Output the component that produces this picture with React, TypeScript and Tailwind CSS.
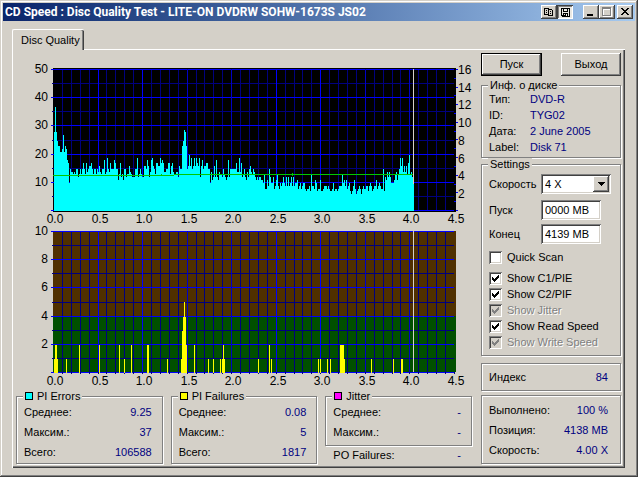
import clsx from "clsx";
import type { ReactNode } from "react";

const RAISED =
  "bg-[#d4d0c8] shadow-[inset_-1px_-1px_#404040,inset_1px_1px_#fff,inset_-2px_-2px_#808080]";
const SUNKEN =
  "shadow-[inset_1px_1px_#808080,inset_-1px_-1px_#fff,inset_2px_2px_#404040,inset_-2px_-2px_#d4d0c8]";
const ETCHED = "border border-[#808080] shadow-[inset_1px_1px_#fff,1px_1px_#fff]";

// PI errors, one value for each pixel column
const PIE = [
  28, 37, 28, 25, 23, 23, 21, 21, 22, 27, 21, 23, 22, 18, 17, 10, 15, 14, 14, 13, 14, 13, 15, 15,
  12, 13, 15, 13, 15, 17, 15, 13, 17, 14, 15, 16, 16, 17, 15, 13, 15, 15, 13, 15, 14, 16, 14, 13,
  15, 15, 18, 13, 14, 19, 15, 14, 17, 15, 15, 15, 18, 17, 15, 15, 11, 13, 17, 12, 13, 11, 15, 15,
  12, 13, 13, 16, 14, 13, 12, 12, 12, 15, 15, 19, 12, 13, 15, 13, 12, 12, 16, 16, 15, 18, 16, 12,
  14, 18, 19, 16, 15, 13, 17, 17, 16, 16, 19, 17, 18, 17, 14, 14, 15, 15, 17, 17, 13, 16, 17, 14,
  13, 13, 14, 14, 12, 16, 15, 15, 23, 25, 29, 28, 23, 15, 16, 20, 16, 19, 15, 16, 19, 16, 19, 17,
  16, 19, 12, 16, 18, 15, 16, 16, 17, 17, 15, 15, 10, 14, 11, 12, 16, 12, 18, 12, 11, 14, 13, 13,
  12, 15, 13, 12, 11, 12, 18, 12, 15, 15, 15, 15, 15, 15, 17, 14, 14, 19, 14, 17, 12, 13, 15, 12,
  11, 14, 12, 15, 16, 14, 13, 15, 14, 12, 11, 12, 11, 12, 12, 11, 11, 10, 13, 8, 8, 11, 9, 15,
  12, 10, 10, 12, 8, 9, 11, 13, 9, 8, 10, 9, 10, 12, 10, 9, 12, 9, 12, 9, 10, 12, 9, 12,
  9, 10, 10, 11, 8, 9, 10, 8, 9, 10, 10, 8, 7, 8, 8, 9, 7, 13, 9, 9, 8, 11, 10, 7,
  8, 8, 11, 7, 7, 8, 9, 9, 9, 8, 9, 8, 7, 7, 8, 10, 7, 8, 8, 7, 8, 9, 9, 9,
  13, 10, 11, 9, 11, 8, 9, 10, 7, 6, 7, 9, 11, 8, 6, 7, 8, 9, 8, 6, 8, 9, 8, 8,
  9, 9, 7, 9, 10, 9, 7, 8, 9, 9, 11, 8, 9, 10, 9, 8, 8, 15, 7, 12, 11, 14, 12, 14,
  12, 10, 10, 10, 11, 13, 14, 11, 13, 15, 19, 16, 19, 14, 16, 14, 16, 13, 17, 20, 13, 14, 12, 10,
];

// PI failures: [column, count]
const PIF = [
  [1, 1], [2, 2], [3, 2], [4, 1], [13, 1], [26, 2], [46, 2], [66, 2], [71, 1], [78, 2],
  [94, 2], [95, 2], [114, 1], [128, 1], [129, 3], [130, 4], [131, 5], [132, 4], [133, 2],
  [141, 2], [155, 1], [160, 1], [167, 1], [169, 1], [170, 2], [171, 1], [205, 1], [216, 2],
  [218, 1], [265, 1], [267, 1], [274, 1], [277, 1], [287, 2], [288, 2], [289, 2], [290, 2],
  [291, 1], [318, 1], [340, 1], [348, 1], [349, 1],
];

const X_STEPS = Array.from({ length: 45 }, (_, i) => i + 1);
const X_MINOR = X_STEPS.slice(0, 44).filter((n) => n % 5 !== 0);
const X_MAJOR = [5, 10, 15, 20, 25, 30, 35, 40];
const X_DIM = [15, 20, 35, 40];
const X_LABELS = ["0.0", "0.5", "1.0", "1.5", "2.0", "2.5", "3.0", "3.5", "4.0", "4.5"];

/** Grid with its left ticks; row 0 is the top line, row 10 the base line. */
function Grid() {
  return (
    <>
      {X_MINOR.map((n) => (
        <rect key={n} x={Math.round(n * 8.91)} y={0} width={1} height={141} fill="#000080" />
      ))}
      {[1, 3, 5, 7, 9].map((n) => (
        <rect key={n} x={-1} y={Math.round(n * 14.1)} width={402} height={1} fill="#000080" />
      ))}
      {[0, 2, 4, 6, 8, 10].map((n) => (
        <rect key={n} x={-2} y={Math.round(n * 14.1)} width={403} height={1} fill="#0000ff" />
      ))}
      {X_MAJOR.map((n) => (
        <rect
          key={n}
          x={Math.round(n * 8.91)}
          y={0}
          width={1}
          height={141}
          fill={X_DIM.includes(n) ? "#0000c8" : "#0000ff"}
        />
      ))}
    </>
  );
}

function AxisLabels({ left, y }: { left: string[]; y: number }) {
  return (
    <g fill="#000" fontSize={12}>
      {left.map((label, i) => (
        <text key={label} x={-5} y={Math.round(i * 28.2) + 4} textAnchor="end">
          {label}
        </text>
      ))}
      {X_LABELS.map((label, i) => (
        <text key={label} x={Math.round(i * 44.5) + 2} y={y} textAnchor="middle">
          {label}
        </text>
      ))}
    </g>
  );
}

function ErrorsChart() {
  return (
    <svg viewBox="0 0 463 175" className="block h-auto w-full" role="img" aria-label="PI Errors">
      <g transform="translate(40 19)" shapeRendering="crispEdges">
        <rect x={0} y={-1} width={403} height={144} fill="#000" />
        <Grid />
        {PIE.map((v, i) => {
          const h = Math.round(v * 2.81);
          return <rect key={i} x={i + 1} y={142 - h} width={1} height={h} fill="#00ffff" />;
        })}
        <path d="M0 106h121v1H0zM121 105h239v1H121zM108 105h1v1h-1zM239 104h1v3h-1z" fill="#00c800" />
        <rect x={360} y={0} width={1} height={115} fill="#d4d0c8" />
        {Array.from({ length: 17 }, (_, i) => (
          <rect
            key={i}
            x={i % 2 ? 401 : 403}
            y={Math.round(i * 8.81)}
            width={2}
            height={1}
            fill="#0000ff"
          />
        ))}
        <AxisLabels left={["50", "40", "30", "20", "10"]} y={154} />
        {[16, 14, 12, 10, 8, 6, 4, 2].map((n, i) => (
          <text key={n} x={405} y={Math.round(i * 17.7) + 5} fontSize={12}>
            {n}
          </text>
        ))}
      </g>
    </svg>
  );
}

function FailuresChart() {
  return (
    <svg viewBox="0 0 463 165" className="block h-auto w-full" role="img" aria-label="PI Failures">
      <g transform="translate(40 6)" shapeRendering="crispEdges">
        <rect x={0} y={0} width={403} height={85} fill="#503000" />
        <rect x={0} y={85} width={403} height={56} fill="#005000" />
        <Grid />
        {X_STEPS.map((n) => (
          <rect key={n} x={Math.round(n * 8.91)} y={141} width={1} height={2} fill="#000080" />
        ))}
        {PIF.map(([x, v]) => {
          const h = Math.round(v * 14.1);
          return <rect key={x} x={x} y={142 - h} width={1} height={h} fill="#ffff00" />;
        })}
        <rect x={360} y={0} width={1} height={141} fill="#d4d0c8" />
        <AxisLabels left={["10", "8", "6", "4", "2"]} y={154} />
      </g>
    </svg>
  );
}

function Group({ title, className, children }: { title: ReactNode; className?: string; children: ReactNode }) {
  return (
    <fieldset className={clsx("min-w-0", ETCHED, className)}>
      <legend className="ml-1.5 flex h-3 items-center gap-1 bg-[#d4d0c8] px-0.5 leading-3">{title}</legend>
      {children}
    </fieldset>
  );
}

function Stat({ label, value }: { label: string; value: string }) {
  return (
    <div className="flex h-5 items-center justify-between">
      <dt>{label}</dt>
      <dd className="text-[#000080]">{value}</dd>
    </div>
  );
}

type StatGroupProps = { title: string; swatch: string; className?: string; rows: string[][] };

function StatGroup({ title, swatch, className, rows }: StatGroupProps) {
  return (
    <Group
      className={className}
      title={
        <>
          <span className={clsx("size-2 border border-black", swatch)} />
          {title}
        </>
      }
    >
      <dl className="pr-2.5 pb-px pl-[7px]">
        {rows.map(([label, value]) => (
          <Stat key={label} label={label} value={value} />
        ))}
      </dl>
    </Group>
  );
}

function Check({ label, checked, disabled }: { label: string; checked?: boolean; disabled?: boolean }) {
  return (
    <label
      className={clsx(
        "flex h-4 items-center gap-[5px]",
        disabled && "text-[#808080] [text-shadow:1px_1px_#fff]",
      )}
    >
      <span className="grid size-[13px]">
        <input
          type="checkbox"
          defaultChecked={checked}
          disabled={disabled}
          className={clsx("peer size-[13px] appearance-none [grid-area:1/1]", SUNKEN, disabled ? "bg-[#d4d0c8]" : "bg-white")}
        />
        <svg
          viewBox="0 0 13 13"
          shapeRendering="crispEdges"
          fill="currentColor"
          className="pointer-events-none hidden size-[13px] [grid-area:1/1] peer-checked:block"
        >
          <path d="M3 5h1v3H3zM4 6h1v3H4zM5 7h1v3H5zM6 6h1v3H6zM7 5h1v3H7zM8 4h1v3H8zM9 3h1v3H9z" />
        </svg>
      </span>
      {label}
    </label>
  );
}

function TitleButton({ label, pressed, children }: { label: string; pressed?: boolean; children: ReactNode }) {
  return (
    <button
      type="button"
      aria-label={label}
      className={clsx(
        "h-3.5 w-4",
        pressed ? "bg-[#eae8e3] shadow-[inset_1px_1px_#404040,inset_-1px_-1px_#fff,inset_2px_2px_#808080]" : RAISED,
      )}
    >
      <svg viewBox="0 0 16 14" shapeRendering="crispEdges" className="block h-3.5 w-4">
        {children}
      </svg>
    </button>
  );
}

function TitleBar() {
  return (
    <header className="flex h-[18px] items-center bg-linear-to-r from-[#0a246a] to-[#a6caf0] px-0.5">
      <h1 className="flex-1 truncate font-[Roboto,sans-serif] text-[12px] leading-[18px] font-bold text-white">
        CD Speed : Disc Quality Test - LITE-ON DVDRW SOHW-1673S JS02
      </h1>
      <TitleButton label="Copy">
        <path d="M3 3h4v1H3zM3 3h1v7H3zM3 9h4v1H3zM7 3h1v1H7zM5 5h1v1H5zM5 7h1v1H5z" />
        <path d="M7 4h4v1H7zM7 4h1v7H7zM7 10h5v1H7zM11 5h1v6h-1zM9 6h1v1H9zM9 8h1v1H9z" />
      </TitleButton>
      <TitleButton label="Save" pressed>
        <path fillRule="evenodd" d="M4 3h9v9H5v-1H4zM5 4v6h1v1h6V4z" />
        <path d="M6 4h1v3H6zM10 4h1v3h-1zM6 6h5v1H6zM6 8h5v1H6zM6 9h1v2H6zM7 10h1v1H7zM8 9h1v2H8zM10 9h1v2h-1z" />
      </TitleButton>
      <div className="ml-2.5 flex">
        <TitleButton label="Minimize">
          <path d="M4 9h6v2H4z" />
        </TitleButton>
        <TitleButton label="Maximize">
          <path fill="#fff" fillRule="evenodd" d="M4 3h9v9H4zM5 5v6h7V5z" />
          <path fill="#808080" fillRule="evenodd" d="M3 2h9v9H3zM4 4v6h7V4z" />
        </TitleButton>
      </div>
      <div className="ml-0.5 flex">
        <TitleButton label="Close">
          <path d="M4 3h2v1h1v1h2V4h1V3h2v1h-1v1h-1v1H9v1h1v1h1v1h1v1h-2V9H9V8H7v1H6v1H4V9h1V8h1V7h1V6H6V5H5V4H4z" />
        </TitleButton>
      </div>
    </header>
  );
}

const INFO = [
  ["Тип:", "DVD-R"],
  ["ID:", "TYG02"],
  ["Дата:", "2 June 2005"],
  ["Label:", "Disk 71"],
];

function SidePanel() {
  return (
    <aside className="flex w-[140px] shrink-0 flex-col pt-[3px]">
      <div className="mb-[3px] flex justify-between">
        <button
          type="button"
          className="h-[23px] w-[61px] border border-black bg-[#d4d0c8] pb-0.5 shadow-[inset_-1px_-1px_#404040,inset_1px_1px_#fff,inset_-2px_-2px_#808080]"
        >
          Пуск
        </button>
        <button type="button" className={clsx("h-[23px] w-[60px] pb-0.5", RAISED)}>
          Выход
        </button>
      </div>

      <Group title="Инф. о диске">
        <dl className="px-[7px] pb-0.5">
          {INFO.map(([label, value]) => (
            <div key={label} className="flex h-4 items-center">
              <dt className="w-[41px]">{label}</dt>
              <dd className="text-[#000080]">{value}</dd>
            </div>
          ))}
        </dl>
      </Group>

      <Group title="Settings">
        <div className="px-[7px] pt-1 pb-[5px]">
          <div className="mb-1.5 flex items-center">
            <label htmlFor="speed" className="w-[52px]">
              Скорость
            </label>
            <div className="relative">
              <select id="speed" className={clsx("h-5 w-[70px] appearance-none bg-white pl-1", SUNKEN)}>
                <option>4 X</option>
              </select>
              <span className={clsx("pointer-events-none absolute top-0.5 right-0.5 grid size-4 place-items-center", RAISED)}>
                <svg viewBox="0 0 7 4" shapeRendering="crispEdges" className="h-1 w-[7px]">
                  <path d="M0 0h7v1H0zM1 1h5v1H1zM2 2h3v1H2zM3 3h1v1H3z" />
                </svg>
              </span>
            </div>
          </div>
          <div className="mb-1 flex items-center">
            <label htmlFor="start" className="w-[52px]">
              Пуск
            </label>
            <input id="start" defaultValue="0000 MB" className={clsx("h-5 w-[60px] bg-white px-1", SUNKEN)} />
          </div>
          <div className="mb-[5px] flex items-center">
            <label htmlFor="end" className="w-[52px]">
              Конец
            </label>
            <input id="end" defaultValue="4139 MB" className={clsx("h-5 w-[60px] bg-white px-1", SUNKEN)} />
          </div>
          <Check label="Quick Scan" />
          <div className="mt-[5px]">
            <Check label="Show C1/PIE" checked />
            <Check label="Show C2/PIF" checked />
            <Check label="Show Jitter" checked disabled />
            <Check label="Show Read Speed" checked />
            <Check label="Show Write Speed" checked disabled />
          </div>
        </div>
      </Group>

      <dl className={clsx("mt-[7px] py-[3px] pr-3 pl-[7px]", ETCHED)}>
        <Stat label="Индекс" value="84" />
      </dl>
      <dl className={clsx("mt-1 pt-1 pr-3 pb-[3px] pl-[7px]", ETCHED)}>
        <Stat label="Выполнено:" value="100 %" />
        <Stat label="Позиция:" value="4138 MB" />
        <Stat label="Скорость:" value="4.00 X" />
      </dl>
    </aside>
  );
}

export default function App() {
  return (
    <div className="min-h-screen bg-[#d4d0c8] p-[3px] font-['Liberation_Sans',Arial,sans-serif] text-[11px] leading-4 text-black shadow-[inset_-1px_-1px_#404040,inset_1px_1px_#d4d0c8,inset_-2px_-2px_#808080,inset_2px_2px_#fff]">
      <TitleBar />
      <main className="px-[9px] pt-2 pb-[5px]">
        <div role="tablist" className="relative -mb-px flex">
          <button
            type="button"
            role="tab"
            aria-selected="true"
            className="h-[21px] rounded-t-xs border-t border-l border-white bg-[#d4d0c8] pr-1 pl-2 shadow-[inset_-1px_0_#404040,inset_-2px_0_#808080]"
          >
            Disc Quality
          </button>
        </div>
        <div className="mr-px flex gap-[5px] border-t border-l border-white pr-1 pb-1 shadow-[inset_-1px_-1px_#404040,inset_-2px_-2px_#808080]">
          <section className="min-w-0 flex-1">
            <ErrorsChart />
            <FailuresChart />
            <div className="grid grid-cols-3 items-start gap-2 pr-1 pl-[3px]">
              <StatGroup
                title="PI Errors"
                swatch="bg-[#00ffff]"
                rows={[["Среднее:", "9.25"], ["Максим.:", "37"], ["Всего:", "106588"]]}
              />
              <StatGroup
                title="PI Failures"
                swatch="bg-[#ffff00]"
                rows={[["Среднее:", "0.08"], ["Максим.:", "5"], ["Всего:", "1817"]]}
              />
              <div>
                <StatGroup
                  title="Jitter"
                  swatch="bg-[#ff00ff]"
                  className="pb-0.5"
                  rows={[["Среднее:", "-"], ["Максим.:", "-"]]}
                />
                <dl className="flex justify-between pt-px pr-[11px] pl-2">
                  <dt>PO Failures:</dt>
                  <dd className="text-[#000080]">-</dd>
                </dl>
              </div>
            </div>
          </section>
          <SidePanel />
        </div>
      </main>
    </div>
  );
}
